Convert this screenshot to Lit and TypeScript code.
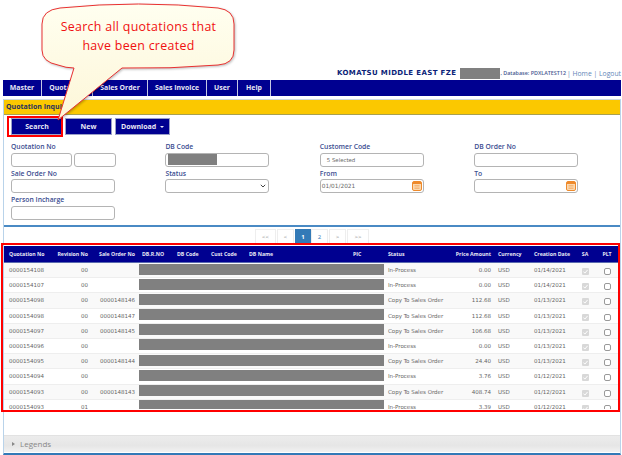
import { html, css, LitElement, svg } from 'lit';
import { customElement } from 'lit/decorators.js';

const COPY = 'Copy To Sales Order';
const PROC = 'In-Process';

const ROWS = [
  ['0000154108', '00', '', PROC, '0.00', '01/14/2021'],
  ['0000154107', '00', '', PROC, '0.00', '01/14/2021'],
  ['0000154098', '00', '0000148146', COPY, '112.68', '01/13/2021'],
  ['0000154098', '00', '0000148147', COPY, '112.68', '01/13/2021'],
  ['0000154097', '00', '0000148145', COPY, '106.68', '01/13/2021'],
  ['0000154096', '00', '', PROC, '0.00', '01/13/2021'],
  ['0000154095', '00', '0000148144', COPY, '24.40', '01/13/2021'],
  ['0000154094', '00', '', PROC, '3.76', '01/12/2021'],
  ['0000154093', '00', '0000148143', COPY, '408.74', '01/12/2021'],
  ['0000154093', '01', '', PROC, '3.39', '01/12/2021'],
];

const calendar = svg`
  <svg class="cal" viewBox="0 0 10 10" width="10" height="10">
    <rect x="0.5" y="0.5" width="9" height="9" rx="1.5" fill="#fbd9b0" stroke="#ee8a2c"/>
    <rect x="1" y="1" width="8" height="2" fill="#ee8a2c"/>
    <path d="M2.5 4.5h5M2.5 6h5M2.5 7.5h5" stroke="#f3a860" stroke-width="0.7"/>
  </svg>`;

const tick = svg`
  <svg viewBox="0 0 7 7" width="7" height="7">
    <path d="M1.5 3.6l1.4 1.5 2.7-3.2" fill="none" stroke="#fff" stroke-width="1"/>
  </svg>`;

const chevron = svg`
  <svg class="chev" viewBox="0 0 6 4" width="6" height="4">
    <path d="M0.8 0.8l2.2 2.2 2.2-2.2" fill="none" stroke="#444" stroke-width="1"/>
  </svg>`;

@customElement('app-root')
export class AppRoot extends LitElement {
  static override styles = css`
    :host {
      display: block;
      position: relative;
      width: 622px;
      height: 455px;
      overflow: hidden;
      background: #fff;
      font-family: 'Open Sans', 'Liberation Sans', sans-serif;
    }

    .top {
      height: 80px;
      box-sizing: border-box;
      display: flex;
      justify-content: flex-end;
      align-items: flex-end;
      padding: 0 1px 1px 0;
      white-space: nowrap;
    }
    .brand {
      font: bold 7px 'DejaVu Sans', sans-serif;
      letter-spacing: 0.37px;
      color: #0b1f78;
      margin-right: 4px;
      line-height: 11px;
    }
    .mask {
      width: 40px;
      height: 11px;
      background: #808080;
    }
    .db {
      font-size: 5.4px;
      font-weight: 600;
      color: #4a5a92;
      line-height: 11px;
    }
    .links {
      font-size: 6.8px;
      color: #5f86b8;
      line-height: 11px;
      margin-left: 1px;
    }

    .nav {
      height: 16px;
      margin: 0 1px 3px 3px;
      background: #000090;
      display: flex;
    }
    .nav a {
      box-sizing: border-box;
      border-right: 1px solid #c5c8e4;
      color: #e8e8f5;
      font-size: 6.9px;
      font-weight: 700;
      line-height: 16px;
      text-align: center;
    }

    .panel {
      margin: 0 1px 0 3px;
      height: 356px;
      box-sizing: border-box;
      border-left: 1px solid #b9d3ea;
      border-right: 1px solid #b9d3ea;
      border-bottom: 2px solid #337ab7;
      display: flex;
      flex-direction: column;
    }
    .title {
      height: 16px;
      box-sizing: border-box;
      background: #fbc800;
      border-top: 1px solid #cfd8e0;
      border-bottom: 1px solid #a8a050;
      color: #26305e;
      font-size: 7px;
      font-weight: 700;
      line-height: 14px;
      padding-left: 2px;
    }
    .tools {
      display: flex;
      gap: 2px;
      padding: 3px 0 0 7px;
    }
    .tools button {
      height: 17px;
      padding: 0;
      border: 1px solid #9aa0c8;
      background: #000090;
      color: #e8e8f5;
      font-family: inherit;
      font-size: 7px;
      font-weight: 700;
    }
    .tools .search { width: 52px; }
    .tools .new { width: 47px; }
    .tools .download { width: 55px; margin-left: 1px; }
    .caret {
      display: inline-block;
      border: 2px solid transparent;
      border-top-color: #e8e8f5;
      border-bottom: 0;
      margin-left: 2px;
      vertical-align: middle;
    }

    .form {
      height: 92px;
      box-sizing: border-box;
      border-bottom: 2px solid #4a8ac4;
      padding: 6px 0 0 7px;
      display: grid;
      grid-template-columns: repeat(4, 154.4px);
      grid-auto-rows: 26.6px;
    }
    .field label {
      display: block;
      height: 11.5px;
      line-height: 11px;
      font-size: 6.8px;
      font-weight: 600;
      color: #3a4c90;
    }
    .box {
      box-sizing: border-box;
      height: 14px;
      border: 1px solid #b4b4b4;
      border-radius: 3px;
      background: #fff;
      display: flex;
      align-items: center;
      font: 5.8px 'DejaVu Sans', sans-serif;
      color: #666;
    }
    .w104 { width: 104px; }
    .pair { display: flex; gap: 2px; }
    .w61 { width: 61px; }
    .w42 { width: 42px; }
    .dbcode { padding-left: 2px; }
    .dbcode i {
      width: 49px;
      height: 11px;
      background: #808080;
    }
    .selected { padding-left: 6px; font-size: 5.4px; }
    .date { padding: 0 1px 0 1px; justify-content: space-between; }
    .end { justify-content: flex-end; padding-right: 1px; }
    .cal { flex: none; }
    .status { position: relative; width: 104px; }
    .status select {
      appearance: none;
      width: 100%;
      padding: 0;
      outline: none;
    }
    .chev {
      position: absolute;
      right: 3px;
      top: 5px;
      pointer-events: none;
    }

    .pages {
      height: 19px;
      box-sizing: border-box;
      padding: 2px 0 0 251px;
      display: flex;
      align-items: flex-start;
    }
    .pages span {
      box-sizing: border-box;
      height: 15px;
      border: 1px solid #eee;
      border-bottom: 0;
      font-size: 6px;
      line-height: 14px;
      text-align: center;
      color: #888;
      margin-right: 1px;
    }
    .pages .on {
      background: #337ab7;
      border-color: #337ab7;
      color: #fff;
      font-weight: 700;
      margin-right: 0;
    }
    .pages .two { color: #337ab7; }

    .table {
      height: 163px;
      overflow: hidden;
      flex: none;
    }
    .row {
      display: grid;
      grid-template-columns: 49px 34px 47px 38px 34px 38px 104px 35px 66px 41px 39px 42px 22px 22px;
      padding-left: 3px;
      height: 15.2px;
      box-sizing: border-box;
      border-bottom: 1px solid #eee;
      font: 5.5px/15px 'DejaVu Sans', sans-serif;
      color: #666;
      white-space: nowrap;
    }
    .row:nth-child(even) { background: #f9f9f9; }
    .row:nth-child(odd) { background: #fff; }
    .row.head {
      height: 17px;
      background: #000090;
      border-bottom: 1px solid #5a6ab0;
      color: #e8e8f5;
      font: 700 5.2px/17px 'Open Sans', sans-serif;
    }
    .row > div { padding: 0 2px; }
    .row .r { text-align: right; padding-left: 0; }
    .row .c { text-align: center; padding: 0; }
    .row .in { padding-left: 5px; }
    .row .hidden {
      grid-column: span 5;
      height: 11px;
      margin: 0.5px 2px 0;
      padding: 0;
      background: #808080;
    }
    .check {
      display: block;
      box-sizing: border-box;
      width: 7px;
      height: 7px;
      margin: 5px auto 0;
      border-radius: 2px;
      border: 1px solid #999;
      background: #fff;
    }
    .check.on {
      border: 0;
      border-radius: 1px;
      background: #d8d8d8;
    }
    .check svg { display: block; }

    .legends {
      margin-top: 26px;
      height: 17px;
      box-sizing: border-box;
      background: linear-gradient(#ececec, #e6e6e6 60%, #f1f1f1);
      border-top: 1px solid #e2e2e2;
      color: #888;
      font-size: 8px;
      line-height: 16px;
      padding-left: 8px;
      display: flex;
      align-items: center;
      gap: 5px;
    }
    .legends b {
      border: 2px solid transparent;
      border-left: 3px solid #888;
      border-right: 0;
    }

    /* annotation layer, these sit over the page */
    .hl {
      position: absolute;
      box-sizing: border-box;
      border: 2.5px solid #f00;
      pointer-events: none;
    }
    .hl.btn { left: 7px; top: 116px; width: 56px; height: 21px; }
    .hl.grid { left: 1px; top: 243px; width: 619px; height: 169px; }
    .callout {
      position: absolute;
      left: 38px;
      top: 0;
      filter: drop-shadow(1px 1px 1px rgba(0, 0, 0, 0.25));
    }
    .callout-text {
      position: absolute;
      left: 58px;
      top: 17px;
      width: 161px;
      text-align: center;
      color: #f01010;
      font-size: 12.4px;
      line-height: 19px;
      letter-spacing: 0.3px;
    }
  `;

  private field(label: string, body: unknown) {
    return html`<div class="field"><label>${label}</label>${body}</div>`;
  }

  override render() {
    const nav: [string, number][] = [
      ['Master', 39],
      ['Quotation', 51],
      ['Sales Order', 55],
      ['Sales Invoice', 59],
      ['User', 31],
      ['Help', 33],
    ];
    const pages: [string, number, string][] = [
      ['<<', 21, ''],
      ['<', 17, ''],
      ['1', 16, 'on'],
      ['2', 17, 'two'],
      ['>', 17, ''],
      ['>>', 22, ''],
    ];
    return html`
      <div class="top">
        <span class="brand">KOMATSU MIDDLE EAST FZE</span>
        <span class="mask"></span>
        <span class="db">, Database: PDXLATEST12</span>
        <span class="links">| Home | Logout</span>
      </div>
      <div class="nav">
        ${nav.map(([t, w]) => html`<a style="width:${w}px">${t}</a>`)}
      </div>
      <div class="panel">
        <div class="title">Quotation Inquiry</div>
        <div class="tools">
          <button class="search">Search</button>
          <button class="new">New</button>
          <button class="download">Download <span class="caret"></span></button>
        </div>
        <div class="form">
          ${this.field(
            'Quotation No',
            html`<div class="pair"><div class="box w61"></div><div class="box w42"></div></div>`
          )}
          ${this.field('DB Code', html`<div class="box w104 dbcode"><i></i></div>`)}
          ${this.field('Customer Code', html`<div class="box w104 selected">5 Selected</div>`)}
          ${this.field('DB Order No', html`<div class="box w104"></div>`)}
          ${this.field('Sale Order No', html`<div class="box w104"></div>`)}
          ${this.field(
            'Status',
            html`<div class="status"><select class="box"></select>${chevron}</div>`
          )}
          ${this.field('From', html`<div class="box w104 date">01/01/2021 ${calendar}</div>`)}
          ${this.field('To', html`<div class="box w104 end">${calendar}</div>`)}
          ${this.field('Person Incharge', html`<div class="box w104"></div>`)}
        </div>
        <div class="pages">
          ${pages.map(
            ([t, w, c]) => html`<span class=${c} style="width:${w}px">${t}</span>`
          )}
        </div>
        <div class="table">
          <div class="row head">
            <div>Quotation No</div>
            <div class="r">Revision No</div>
            <div class="r">Sale Order No</div>
            <div class="in">DB.R.NO</div>
            <div>DB Code</div>
            <div>Cust Code</div>
            <div>DB Name</div>
            <div>PIC</div>
            <div>Status</div>
            <div class="r">Price Amount</div>
            <div class="in">Currency</div>
            <div>Creation Date</div>
            <div class="c">SA</div>
            <div class="c">PLT</div>
          </div>
          ${ROWS.map(
            (r) => html`
              <div class="row">
                <div>${r[0]}</div>
                <div class="r">${r[1]}</div>
                <div class="r">${r[2]}</div>
                <div class="hidden"></div>
                <div>${r[3]}</div>
                <div class="r">${r[4]}</div>
                <div class="in">USD</div>
                <div>${r[5]}</div>
                <div class="c"><span class="check on">${tick}</span></div>
                <div class="c"><span class="check"></span></div>
              </div>
            `
          )}
        </div>
        <div class="legends"><b></b>Legends</div>
      </div>

      <div class="hl btn"></div>
      <div class="hl grid"></div>
      <svg class="callout" width="200" height="126" viewBox="38 0 200 126">
        <defs>
          <linearGradient id="cream" x1="0" y1="0" x2="0" y2="1">
            <stop offset="0" stop-color="#fffff0" />
            <stop offset="1" stop-color="#fdf6d8" />
          </linearGradient>
        </defs>
        <path
          d="M60 8 Q138 0 218 8 Q234 10 234 24 L234 50 Q234 64 218 65 Q170 69 122 68 L58 120 L74 68 Q66 68 58 65 Q42 62 42 50 L42 24 Q42 10 60 8 Z"
          fill="url(#cream)"
          stroke="#e83030"
          stroke-width="1"
        />
      </svg>
      <div class="callout-text">Search all quotations that have been created</div>
    `;
  }
}
